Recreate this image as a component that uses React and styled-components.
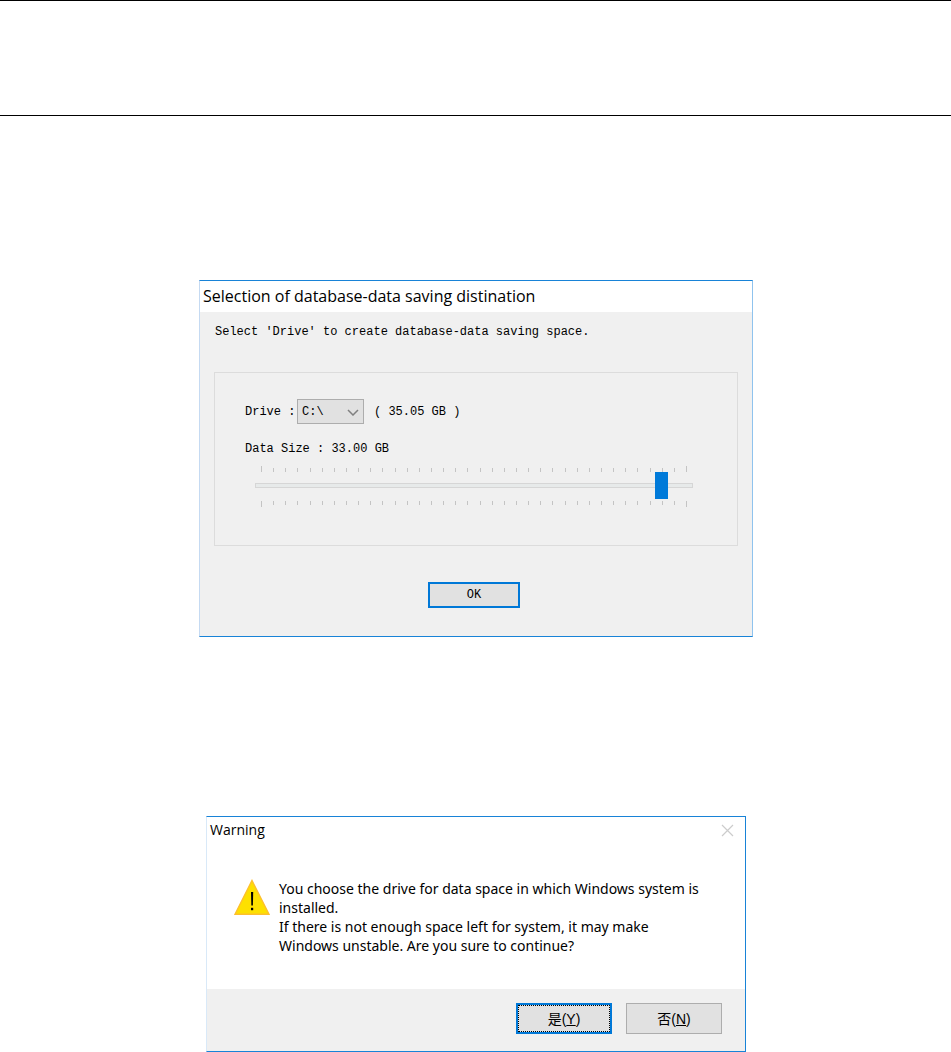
import React, { useState } from 'react';
import styled, { createGlobalStyle } from 'styled-components';

const MAX_SIZE = 35;

const GlobalStyle = createGlobalStyle`
    *, *::before, *::after {
        box-sizing: border-box;
    }

    body {
        margin: 0;
        background: #ffffff;
        color: #000000;
        font-family: "Noto Sans", "Noto Sans CJK SC", sans-serif;
    }
`;

const Header = styled.header`
    height: 116px;
    border-top: 1px solid #000000;
    border-bottom: 1px solid #000000;
`;

const Page = styled.main`
    display: flex;
    flex-direction: column;
    align-items: center;
    gap: 179px;
    padding: 164px 0 0 1px;
`;

const Dialog = styled.section`
    width: 100%;
    max-width: ${props => props.$width}px;
    background: #ffffff;
    border: 1px solid #1883d7;
    border-left-color: ${props => props.$left};
    border-right-color: ${props => props.$right};
`;

const TitleBar = styled.div`
    display: flex;
    align-items: center;
    justify-content: space-between;
    height: ${props => props.$height}px;
    padding: 0 11px 0 3px;

    h2 {
        margin: 0;
        padding-bottom: 2px;
        font-family: "Open Sans", sans-serif;
        font-size: ${props => props.$size}px;
        line-height: 20px;
        font-weight: 400;
    }
`;

const CloseButton = styled.button`
    display: flex;
    padding: 0;
    border: 0;
    background: none;
    color: #cccccc;
`;

const DriveForm = styled.form`
    padding: 10px 14px 28px;
    background: #f0f0f0;
    font-family: "Liberation Mono", monospace;
    font-size: 12px;
    line-height: 20px;

    p {
        margin: 0;
        padding-left: 1px;
    }
`;

const Group = styled.fieldset`
    min-width: 0;
    margin: 30px 0 0;
    padding: 26px 44px 38px 30px;
    border: 1px solid #dcdcdc;
`;

const DriveRow = styled.div`
    display: flex;
    align-items: center;
    height: 25px;

    label {
        width: 52px;
        white-space: nowrap;
    }
`;

const SelectBox = styled.div`
    position: relative;
    width: 67px;
    height: 25px;
    margin-right: 10px;

    select {
        appearance: none;
        width: 100%;
        height: 100%;
        padding: 0 20px 0 4px;
        border: 1px solid #adadad;
        border-radius: 0;
        background: #e1e1e1;
        color: #000000;
        font: inherit;
    }

    svg {
        position: absolute;
        top: 10px;
        right: 5px;
        pointer-events: none;
    }
`;

const SizeLabel = styled.label`
    display: block;
    margin: 15px 0 7px;
`;

const SliderBox = styled.div`
    padding-left: 10px;
`;

const Ticks = styled.div`
    display: flex;
    justify-content: space-between;
    align-items: ${props => (props.$below ? 'flex-start' : 'flex-end')};
    height: 6px;
    padding: 0 6px;

    span {
        width: 1px;
        height: 4px;
        background: #c4c4c4;
    }

    span:first-child,
    span:last-child {
        height: 6px;
    }
`;

const Slider = styled.input`
    appearance: none;
    display: block;
    width: 100%;
    height: 27px;
    margin: 0 0 2px;
    background: none;

    &::-webkit-slider-runnable-track {
        height: 5px;
        border: 1px solid #d6d6d6;
        background: #e7eaea;
    }

    &::-webkit-slider-thumb {
        appearance: none;
        width: 13px;
        height: 27px;
        margin-top: -12px;
        border: 0;
        border-radius: 0;
        background: #007ad9;
    }
`;

const Actions = styled.div`
    display: flex;
    justify-content: center;
    padding: 36px 4px 0 0;
`;

const Button = styled.button`
    width: ${props => props.$width}px;
    height: ${props => props.$height}px;
    padding: 0;
    border: ${props => (props.$primary ? '2px solid #0078d7' : '1px solid #adadad')};
    border-radius: 0;
    outline: ${props => (props.$focused ? '1px dotted #000000' : 'none')};
    outline-offset: -3px;
    background: #e1e1e1;
    color: #000000;
    font: inherit;
`;

const Message = styled.div`
    display: flex;
    gap: 9px;
    padding: 35px 28px 34px 27px;
    font-size: 14px;
    line-height: 19px;

    svg {
        flex: none;
    }

    p {
        margin: 0;
    }
`;

const Footer = styled.div`
    display: flex;
    justify-content: flex-end;
    gap: 14px;
    padding: 14px 23px 17px;
    background: #f0f0f0;
    font-family: "Liberation Sans", "Noto Sans CJK SC", sans-serif;
    font-size: 14px;
    line-height: 20px;
`;

const WarningIcon = () => (
    <svg width="36" height="36" viewBox="0 0 36 36" aria-hidden="true">
        <path d="M18 1.5 L35 35.3 H1 Z" fill="#fde000" stroke="#fdbf2d" strokeWidth="1.4" />
        <path d="M17 13 H19.2 L18.9 26.5 H17.3 Z" fill="#000000" />
        <rect x="17" y="28.8" width="2.2" height="2.4" fill="#000000" />
    </svg>
);

const TickRow = ({ below }) => (
    <Ticks $below={below} aria-hidden="true">
        {Array.from({ length: MAX_SIZE + 1 }, (_, i) => <span key={i} />)}
    </Ticks>
);

const DriveDialog = () => {
    const [size, setSize] = useState(33);

    return (
        <Dialog $width={554} $left="#c5daf2" $right="#8fc3ee" role="dialog" aria-labelledby="drive-title">
            <TitleBar $height={31} $size={16}>
                <h2 id="drive-title">Selection of database-data saving distination</h2>
            </TitleBar>
            <DriveForm onSubmit={e => e.preventDefault()}>
                <p>Select 'Drive' to create database-data saving space.</p>
                <Group>
                    <DriveRow>
                        <label htmlFor="drive">Drive :</label>
                        <SelectBox>
                            <select id="drive" defaultValue="C">
                                <option value="C">C:\</option>
                            </select>
                            <svg width="12" height="7" viewBox="0 0 12 7" fill="none" stroke="#808080" strokeWidth="1.5" aria-hidden="true">
                                <path d="M1 1 L6 6 L11 1" />
                            </svg>
                        </SelectBox>
                        <span>( 35.05 GB )</span>
                    </DriveRow>
                    <SizeLabel htmlFor="size">Data Size : {size.toFixed(2)} GB</SizeLabel>
                    <SliderBox>
                        <TickRow />
                        <Slider
                            id="size"
                            type="range"
                            min="0"
                            max={MAX_SIZE}
                            value={size}
                            onChange={e => setSize(Number(e.target.value))}
                        />
                        <TickRow below />
                    </SliderBox>
                </Group>
                <Actions>
                    <Button type="submit" $width={92} $height={26} $primary>OK</Button>
                </Actions>
            </DriveForm>
        </Dialog>
    );
};

const WarningDialog = () => (
    <Dialog $width={540} $left="#d9e9f8" $right="#1883d7" role="alertdialog" aria-labelledby="warning-title">
        <TitleBar $height={27} $size={14}>
            <h2 id="warning-title">Warning</h2>
            <CloseButton type="button" aria-label="Close">
                <svg width="13" height="13" viewBox="0 0 13 13" fill="none" stroke="currentColor" strokeWidth="1.2">
                    <path d="M1 1 L12 12 M12 1 L1 12" />
                </svg>
            </CloseButton>
        </TitleBar>
        <Message>
            <WarningIcon />
            <p>
                You choose the drive for data space in which Windows system is<br />
                installed.<br />
                If there is not enough space left for system, it may make<br />
                Windows unstable. Are you sure to continue?
            </p>
        </Message>
        <Footer>
            <Button type="button" $width={96} $height={31} $primary $focused>是(<u>Y</u>)</Button>
            <Button type="button" $width={96} $height={31}>否(<u>N</u>)</Button>
        </Footer>
    </Dialog>
);

const App = () => (
    <>
        <GlobalStyle />
        <Header />
        <Page>
            <DriveDialog />
            <WarningDialog />
        </Page>
    </>
);

export default App;
